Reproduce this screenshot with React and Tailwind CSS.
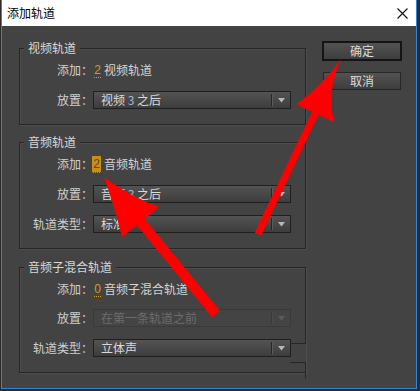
import React from 'react'

function Dropdown({ disabled, children }) {
  return (
    <div
      className={
        disabled
          ? 'flex h-[18px] w-[198px] items-center border border-[#3a3a3a] bg-[#444444]'
          : 'flex h-[18px] w-[198px] items-center border border-[#1f1f1f] bg-gradient-to-b from-[#535353] to-[#3d3d3d]'
      }
    >
      <span className={'flex-1 whitespace-nowrap pl-[7px] leading-[16px] ' + (disabled ? 'text-[#6c6c6c]' : 'text-[#dadada]')}>
        {children}
      </span>
      <span className={'h-[12px] w-[2px] border-l ' + (disabled ? 'border-l-[#393939] border-r border-r-[#4a4a4a]' : 'border-l-[#262626] border-r border-r-[#5a5a5a]')} />
      <span className="flex w-[17px] items-center justify-center">
        <svg width="7" height="5" viewBox="0 0 7 5">
          <path d="M0 0H7L3.5 4.5Z" fill={disabled ? '#5c5c5c' : '#b8b8b8'} />
        </svg>
      </span>
    </div>
  )
}

function Row({ label, className = '', children }) {
  return (
    <div className={'flex h-[18px] items-center ' + className}>
      <span className="w-[73px] whitespace-nowrap text-right leading-[18px] text-[#cfcfcf]">{label}</span>
      {children}
    </div>
  )
}

function Count({ value, active, name }) {
  return (
    <>
      <span
        className={
          active
            ? 'ml-[-1px] flex h-[17px] w-[9px] items-center justify-center border-b border-dotted border-[#5a4a20] bg-[#c9900e] font-["Liberation_Sans",sans-serif] leading-[16px] text-[#4a4a4a]'
            : 'ml-[1px] flex h-[15px] w-[7px] items-center justify-center border-b border-dotted border-[#d69b18] font-["Liberation_Sans",sans-serif] leading-[14px] text-[#d69b18]'
        }
      >
        {value}
      </span>
      <span className="ml-[3px] whitespace-nowrap leading-[18px] text-[#d4d4d4]">{name}</span>
    </>
  )
}

function Group({ title, className = '', children }) {
  return (
    <fieldset
      className={
        'm-0 w-[287px] border border-[#262626] p-0 pb-[15px] shadow-[1px_1px_0_#4d4d4d,inset_1px_1px_0_#4d4d4d] ' + className
      }
    >
      <legend className="ml-[4px] bg-[#434343] px-[4px] leading-[16px] text-[#d8d8d8]">{title}</legend>
      <div className="pt-[5px]">{children}</div>
    </fieldset>
  )
}

export default function App() {
  return (
    <div className="relative h-[391px] w-[420px] bg-[#2c2c2c] font-['Noto_Sans_CJK_SC','Microsoft_YaHei',sans-serif] text-[12px]">
      <div className="ml-[1px] flex h-[389px] w-[416px] flex-col border-x border-b border-[#2f86d9]">
        <div className="flex h-[26px] items-center justify-between bg-white pl-[5px] pr-[8px]">
          <span className="leading-[16px] text-black">添加轨道</span>
          <svg width="11" height="11" viewBox="0 0 11 11">
            <path d="M0.5 0.5L10.5 10.5M10.5 0.5L0.5 10.5" stroke="#111" strokeWidth="1.1" />
          </svg>
        </div>

        <div className="flex flex-1 bg-[#434343] pl-[17px] pt-[14px]">
          <div className="flex flex-col">
            <Group title="视频轨道">
              <Row label="添加：">
                <Count value="2" name="视频轨道" />
              </Row>
              <Row label="放置：" className="mt-[12px]">
                <Dropdown>
                  视频 <span className="text-[#aab4d8]">3</span> 之后
                </Dropdown>
              </Row>
            </Group>

            <Group title="音频轨道" className="mt-[9px]">
              <Row label="添加：">
                <Count value="2" name="音频轨道" active />
              </Row>
              <Row label="放置：" className="mt-[12px]">
                <Dropdown>
                  音频 <span className="text-[#aab4d8]">3</span> 之后
                </Dropdown>
              </Row>
              <Row label="轨道类型：" className="mt-[12px]">
                <Dropdown>标准</Dropdown>
              </Row>
            </Group>

            <div className="relative mt-[10px]">
              <Group title="音频子混合轨道" className="border-r-0">
                <Row label="添加：">
                  <Count value="0" name="音频子混合轨道" />
                </Row>
                <Row label="放置：" className="mt-[11px]">
                  <Dropdown disabled>在第一条轨道之前</Dropdown>
                </Row>
                <Row label="轨道类型：" className="mt-[12px]">
                  <Dropdown>立体声</Dropdown>
                </Row>
              </Group>
              <div className="absolute left-[286px] top-[8px] h-[77px] w-[1px] bg-[#262626]" />
              <div className="absolute left-[271px] top-[84px] h-[1px] w-[16px] bg-[#262626]" />
              <div className="absolute left-[271px] top-[103px] h-[1px] w-[16px] bg-[#262626]" />
              <div className="absolute left-[286px] top-[103px] h-[16px] w-[1px] bg-[#262626]" />
            </div>
          </div>

          <div className="ml-[16px] flex flex-col pt-[1px]">
            <button
              type="button"
              className="flex h-[20px] w-[80px] items-center justify-center border-2 border-[#141414] bg-gradient-to-b from-[#525252] to-[#3e3e3e] leading-[16px] text-[#dcdcdc]"
            >
              确定
            </button>
            <button
              type="button"
              className="ml-[1px] mt-[11px] flex h-[18px] w-[78px] items-center justify-center border border-[#272727] bg-gradient-to-b from-[#525252] to-[#3e3e3e] leading-[16px] text-[#dcdcdc]"
            >
              取消
            </button>
          </div>
        </div>
      </div>

      <svg className="pointer-events-none absolute left-0 top-0" width="420" height="391" viewBox="0 0 420 391">
        <path
          d="M341 59 Q326 92 334.3 122.2 L318.5 114.7 L261.2 235.5 L254.8 232.5 L312.1 111.7 L296.3 104.2 Q322 86 341 59 Z"
          fill="#ff0000"
        />
        <path
          d="M104 177 Q134 199 159.3 206.7 L144.6 218.7 L219.9 310.8 L212.1 317.2 L136.8 225.1 L122.1 237.1 Q114 205 104 177 Z"
          fill="#ff0000"
        />
      </svg>
    </div>
  )
}
